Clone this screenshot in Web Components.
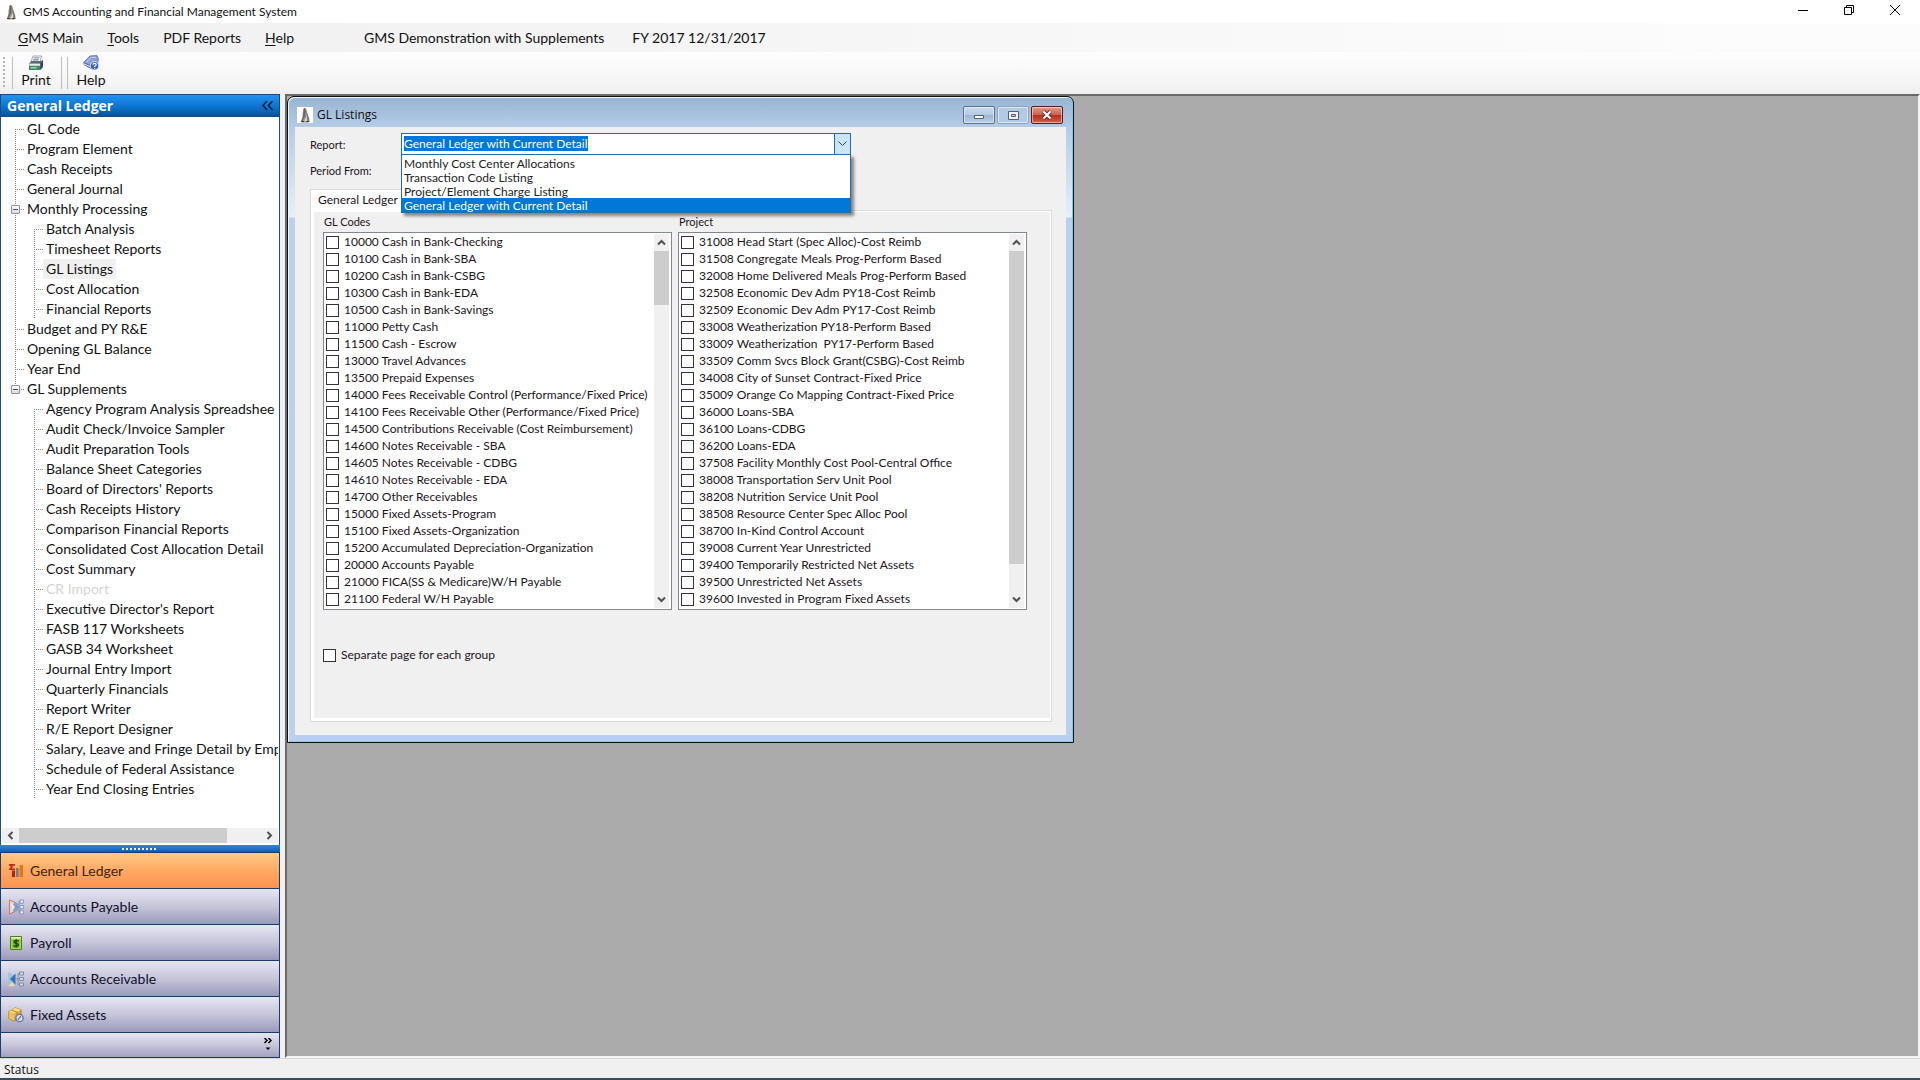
<!DOCTYPE html>
<html lang="en">
<head>
<meta charset="utf-8">
<title>GMS Accounting and Financial Management System</title>
<style>
html, body { height: 100%; }
body { margin: 0; overflow: hidden; font: 12px/16px "Open Sans", sans-serif; color: #111; background: #f0f0f0; }
</style>
</head>
<body>
<gms-app></gms-app>
<script>
const LATO = '"Lato", "Open Sans", sans-serif';
const UI = '"Open Sans", sans-serif';

class GmsElement extends HTMLElement {
  connectedCallback() {
    if (this.shadowRoot) return;
    this.attachShadow({ mode: 'open' }).innerHTML =
      `<style>*{box-sizing:border-box}:host{box-sizing:border-box}button{font:inherit;color:inherit;border:0;background:none;padding:0;margin:0;text-align:left}${this.css()}</style>${this.html()}`;
  }
  css() { return ''; }
  html() { return '<slot></slot>'; }
}
const define = (name, cls) => customElements.define(name, cls);

/* ---------- icons ---------- */
const ICONS = {
  logo: '<path d="M6.5 1.5 8 .8l1.4 1.4.5 3.3 2.2 5.3.6 3.4-2 1.2H5.2l-1.4-1 1.5-3.6.3-4.6z" fill="#9a958e"/><path d="M6.8 1.4 8 1l.8 3.6-.6 4.3-2.6 4.8-1-.3 1.5-4z" fill="#6b6660"/><path d="M8.8 5l.3 5.4-2 3.8h2.8l.6-4z" fill="#d9d5cc"/><path d="M9.4 3l2.2 8 .5 3-1.2-.3-1.500-5.400z" fill="#7a756e"/><path d="M4 14.5h3.2M9 14.6h3.4" stroke="#3e3a36"/>',
  print: '<path d="M5 1h8.5L12 7H3z" fill="#fdfdff" stroke="#8a93a8" stroke-width=".8"/><path d="M5.8 2.8h5.6M5.2 4.4h5.6M4.8 6h5.4" stroke="#5d6f96" stroke-width=".8"/><path d="M1 8.5 3.5 6H13l2-1.2V12l-2.6 3H1z" fill="#5b6876"/><path d="M1.3 8.6h11v2.2h-11z" fill="#e6edf0"/><path d="M1.6 11h10.6v3.5H1.6z" fill="#3e8e62"/><path d="M2.5 12h6v1.6h-6z" fill="#8fd8a8"/><path d="m12.4 8.5 2.4-3V12l-2.4 2.6z" fill="#34485a"/>',
  help: '<path d="M.5 7.5 7 1l7-.4L15.5 4 9 11z" fill="#8d9fd8" stroke="#5667a8" stroke-width=".8"/><path d="M.5 7.5 9 11v3.4L.8 10z" fill="#5568ac"/><path d="m1 9 8 3.3" stroke="#e7ecff"/><path d="m9 11 6.5-7v4L9 14.4z" fill="#7b8cc8"/><path d="M3.6 7 8 2.4h5" stroke="#c4cff3" fill="none"/><circle cx="11.5" cy="10.8" r="4.3" fill="#3f63c4" stroke="#d6e0fa"/><path d="M10 9.8c0-2 3.2-2 3.1-.1 0 1.1-1.5 1-1.5 2.2m0 .9v1" stroke="#fff" stroke-width="1.2" fill="none"/>',
  ledger: '<path d="M1 1h6v1.7H3.8L5.3 4 3.7 5.5H7V7H1V5.9L3 4 1 2.2z" fill="#c3271c"/><path d="M4 7.5h3V14H4z" fill="#b02418"/><path d="M8 5h2.6v9H8z" fill="#6f7b97"/><path d="M11.6 2H15v12h-3.4z" fill="#d97b12"/>',
  payable: '<path d="M1.5 1 9 4.5v7L1.5 15z" fill="#f6d3c3" stroke="#cf7461"/><path d="M3 9 6.5 3.5 9.5 5v6L5 12.5z" fill="#6aa3dc"/><path d="M3.5 4 7 8l-3.6 5z" fill="#fbead9"/><path d="M9 8h2M11 2.5v11M11 2.5h1M11 13.5h1" stroke="#7888a8" fill="none"/><path d="M12 1h3.4v3.2H12zM12 6.4h3.4v3.2H12zM12 11.8h3.4V15H12z" fill="#eef3fb" stroke="#7d8fb5" stroke-width=".9"/>',
  payroll: '<path d="M2.5 1.5h11v13h-11z" fill="#a8d94a" stroke="#4d7a23"/><path d="M3 2h10v1.6H3z" fill="#e3f5b4"/><path d="M4.4 4.5h7.2v8.4H4.4z" fill="#7fbf33"/><path d="M10.6 6.4c-.7-1.2-4.6-1.4-4.6.6 0 1.8 4.4 1 4.4 2.8 0 2-4 1.800-4.900.5M8.200 4.300v8.400" stroke="#1f4a12" stroke-width="1.400" fill="none"/>',
  receivable: '<path d="M0 1 7 5v6l-7 4z" fill="#9cc7e0"/><path d="M2 8 7.500 2.500v11z" fill="#2f76b8"/><path d="m0 15 4-3.500 3 2.500-2 1.500z" fill="#ead9a0"/><path d="M8 8h3M10 2.500v11M10 2.500h1.500M10 13.500h1.500" stroke="#8a8f9c" fill="none"/><path d="M11.500 1h4v3h-4zM11.500 6.500h4v3h-4zM11.500 12h4v3h-4z" fill="#d6d8e2" stroke="#858a98"/>',
  assets: '<path d="m.8 4.500 6.500-3.700L13 3v6.500L6 14 .8 11.500z" fill="#e9a63a" stroke="#9c6118" stroke-width=".8"/><path d="m.8 4.500 6.500-3.700L13 3 6.200 6.800z" fill="#ffdc8c"/><path d="M6.200 6.800V14L.8 11.500v-7z" fill="#f4bd57"/><path d="m3.600 3.200 5.700 2v3" stroke="#b87a22" fill="none"/><circle cx="11.500" cy="11" r="3.600" fill="#dfe7f5" stroke="#5e78ab" stroke-width="1.400"/><path d="m9.800 12.800 3.200-3.600" stroke="#54709f" stroke-width="1.200"/>',
};
define('gms-icon', class extends GmsElement {
  css() { return ':host{display:block;width:16px;height:16px;flex:none}svg{display:block}'; }
  html() { return `<svg width="16" height="16" viewBox="0 0 16 16" aria-hidden="true">${ICONS[this.getAttribute('name')]}</svg>`; }
});

/* ---------- application title bar ---------- */
define('gms-titlebar', class extends GmsElement {
  css() { return `:host{display:flex;align-items:center;height:23px;background:#fff;padding:0 2px 0 3px;color:#111;font:12px/16px ${LATO}}
    .name{flex:1;padding-left:4px}
    button{width:46px;height:23px;padding-bottom:3px;display:grid;place-items:center}svg{display:block}`; }
  html() { return `<gms-icon name="logo"></gms-icon><span class="name"><slot></slot></span>
    <button aria-label="Minimize"><svg width="10" height="10"><path d="M0 5.500h10" stroke="#000"/></svg></button>
    <button aria-label="Restore"><svg width="10" height="10" fill="none" stroke="#000"><path d="M.5 2.500h7v7h-7zM2.500 2.500v-2h7v7h-2"/></svg></button>
    <button aria-label="Close"><svg width="10" height="10"><path d="m0 0 10 10M10 0 0 10" stroke="#000"/></svg></button>`; }
});

/* ---------- menu bar ---------- */
define('gms-menubar', class extends GmsElement {
  css() { return `:host{display:flex;align-items:center;height:29px;padding-left:18px;font:14px/20px ${LATO};background:linear-gradient(90deg,#f0f0f0,#fcfcfc 90%)}
    nav{display:flex;gap:24px;width:346px}u{text-underline-offset:2px}.info{display:flex;gap:28px;white-space:nowrap}`; }
  html() { return `<nav><button><u>G</u>MS Main</button><button><u>T</u>ools</button><button>PDF Reports</button><button><u>H</u>elp</button></nav>
    <div class="info"><span>GMS Demonstration with Supplements</span><span>FY 2017 12/31/2017</span></div>`; }
});

/* ---------- toolbar ---------- */
define('gms-toolbar', class extends GmsElement {
  css() { return `:host{display:flex;align-items:center;height:42px;padding-left:3px;background:linear-gradient(#fdfdfd,#f6f6f6 70%,#eee);font:14px/18px ${LATO}}
    .grip{width:2px;height:32px;background:repeating-linear-gradient(#b4b4b4 0 2px,transparent 2px 4px);margin-right:7px}
    i{width:1px;height:32px;background:#bdbdbd}i + i{margin-left:5px}
    button{display:flex;flex-direction:column;align-items:center;width:48px;padding:0 2px 2px 0}`; }
  html() { return `<span class="grip"></span><i></i><button><gms-icon name="print"></gms-icon>Print</button><i></i><i></i><button><gms-icon name="help"></gms-icon>Help</button>`; }
});

/* ---------- scrollbar ---------- */
define('gms-scrollbar', class extends GmsElement {
  css() { const v = this.hasAttribute('vertical'); return `:host{display:flex;flex-direction:${v ? 'column' : 'row'};${v ? 'width' : 'height'}:15px;background:#f0f0f0;flex:none}
    button{width:17px;height:17px;${v ? 'width:15px' : 'height:15px'};display:grid;place-items:center;flex:none}
    .track{flex:1;display:flex;flex-direction:inherit}.thumb{background:#cdcdcd;flex:0 0 ${this.getAttribute('thumb')}%}
    svg{display:block}`; }
  html() {
    const arrow = (label, d) => `<button tabindex="-1" aria-label="${label}"><svg width="9" height="9"><path d="${d}" fill="none" stroke="#505050" stroke-width="2"/></svg></button>`;
    return this.hasAttribute('vertical')
      ? arrow('Scroll up', 'M1 6.500 4.500 3 8 6.500') + '<div class="track"><div class="thumb"></div></div>' + arrow('Scroll down', 'M1 2.500 4.500 6 8 2.500')
      : arrow('Scroll left', 'M6.500 1 3 4.500 6.500 8') + '<div class="track"><div class="thumb"></div></div>' + arrow('Scroll right', 'M2.500 1 6 4.500 2.500 8');
  }
});

/* ---------- navigation tree ---------- */
define('gms-tree-item', class extends GmsElement {
  css() { return `:host{display:block;--line:#8c8c8c}
    .row{display:flex;align-items:center;height:20px;position:relative}
    .stub{width:9px;height:1px;flex:none;background:repeating-linear-gradient(90deg,var(--line) 0 1px,transparent 1px 2px)}
    .label{height:20px;padding:0 3px;white-space:nowrap}
    :host([selected]) .label{background:#f0f0f0}
    :host([disabled]) .label{color:#d4d4d4}
    .toggle{position:absolute;left:-4px;top:6px;width:9px;height:9px;border:1px solid #919191;border-radius:1px;background:linear-gradient(#fff,#dcdcdc)}
    .toggle::after{content:"";position:absolute;left:1px;right:1px;top:3px;height:1px;background:#3c4c94}
    .children{padding-left:19px}`; }
  html() {
    const branch = this.hasAttribute('branch');
    return `<div class="row"><span class="stub"></span>${branch ? '<button class="toggle" aria-label="Collapse"></button>' : ''}<button class="label"${this.hasAttribute('disabled') ? ' disabled' : ''}>${this.getAttribute('label')}</button></div>${branch ? '<div class="children"><slot></slot></div>' : ''}`;
  }
});
/* A vertical dotted guide that runs beside a group, down to the middle of its last row. */
define('gms-tree-group', class extends GmsElement {
  css() { return `:host{display:block;background:repeating-linear-gradient(#8c8c8c 0 1px,transparent 1px 2px) no-repeat 0 var(--guide-top,0)/1px var(--guide)}`; }
});
const TREE = [
  ['GL Code'], ['Program Element'], ['Cash Receipts'], ['General Journal'],
  ['Monthly Processing', ['Batch Analysis', 'Timesheet Reports', 'GL Listings', 'Cost Allocation', 'Financial Reports']],
  ['Budget and PY R&amp;E'], ['Opening GL Balance'], ['Year End'],
  ['GL Supplements', ['Agency Program Analysis Spreadshee', 'Audit Check/Invoice Sampler', 'Audit Preparation Tools', 'Balance Sheet Categories', "Board of Directors' Reports", 'Cash Receipts History', 'Comparison Financial Reports', 'Consolidated Cost Allocation Detail', 'Cost Summary', 'CR Import', "Executive Director's Report", 'FASB 117 Worksheets', 'GASB 34 Worksheet', 'Journal Entry Import', 'Quarterly Financials', 'Report Writer', 'R/E Report Designer', 'Salary, Leave and Fringe Detail by Emp', 'Schedule of Federal Assistance', 'Year End Closing Entries']],
];
define('gms-tree', class extends GmsElement {
  css() { return `:host{display:flex;flex-direction:column;background:#fff;border:solid #1d4e89;border-width:0 1px;padding:2px 1px 2px;font:14px/20px ${LATO};min-height:0;overflow:hidden}
    .view{flex:1;overflow:hidden;padding-left:13px}`; }
  html() {
    const leaf = l => `<gms-tree-item label="${l}"${l === 'GL Listings' ? ' selected' : ''}${l === 'CR Import' ? ' disabled' : ''}></gms-tree-item>`;
    const items = TREE.map(([l, kids]) => kids
      ? `<gms-tree-item branch label="${l}"><gms-tree-group style="--guide:${kids.length * 20 - 10}px">${kids.map(leaf).join('')}</gms-tree-group></gms-tree-item>` : leaf(l)).join('');
    return `<div class="view"><gms-tree-group style="--guide-top:10px;--guide:260px">${items}</gms-tree-group></div><gms-scrollbar thumb="86"></gms-scrollbar>`;
  }
});

/* ---------- sidebar ---------- */
define('gms-nav-button', class extends GmsElement {
  css() { return `:host{display:block;border-bottom:1px solid #1a3c6c}
    button{display:flex;align-items:center;gap:6px;width:100%;height:35px;padding-left:7px;font:14px/20px ${LATO};color:#10102a;background:linear-gradient(#e6e6f2,#c6c5da 50%,#9c9abb)}
    :host([active]) button{background:linear-gradient(#ffca86,#ffa963 50%,#fd9350);color:#3b2408}`; }
  html() { return `<button><gms-icon name="${this.getAttribute('icon')}"></gms-icon><slot></slot></button>`; }
});
define('gms-nav-footer', class extends GmsElement {
  css() { return `:host{display:flex;justify-content:flex-end;height:25px;padding:5px 7px 0;border-bottom:1px solid #1a3c6c;background:linear-gradient(#e6e6f2,#c6c5da 50%,#a3a1c0)}button{height:14px}svg{display:block}`; }
  html() { return `<button aria-label="Configure buttons"><svg width="8" height="14"><path d="m.5 0 2.500 2.500L.5 5M4.500 0 7 2.500 4.500 5" fill="none" stroke="#000" stroke-width="1.500"/><path d="M1.500 9.500h5L4 12z"/></svg></button>`; }
});
define('gms-sidebar', class extends GmsElement {
  css() { return `:host{display:flex;flex-direction:column;width:280px;flex:none;min-height:0}
    header{display:flex;align-items:center;justify-content:space-between;height:23px;padding:0 6px;background:linear-gradient(#2192f0,#0b72cc 60%,#0a5399);border:1px solid #134a86;color:#fff;font:bold 14px/20px ${UI}}
    gms-tree{flex:1}
    .split{height:8px;display:grid;place-items:center;background:linear-gradient(#2a8ae0,#0d5fae);border-bottom:1px solid #1a3c6c}
    .split span{width:36px;height:2px;background:repeating-linear-gradient(90deg,#fff 0 2px,transparent 2px 4px)}
    .stack{border:solid #1a3c6c;border-width:0 1px}
    svg{display:block}`; }
  html() { return `<header><span>General Ledger</span><button aria-label="Collapse sidebar"><svg width="11" height="10"><path d="M5 0 1 4.500 5 9M10.500 0l-4 4.500 4 4.500" fill="none" stroke="#061a33" stroke-width="1.500"/></svg></button></header>
    <gms-tree></gms-tree><div class="split"><span></span></div>
    <div class="stack"><gms-nav-button icon="ledger" active>General Ledger</gms-nav-button><gms-nav-button icon="payable">Accounts Payable</gms-nav-button><gms-nav-button icon="payroll">Payroll</gms-nav-button><gms-nav-button icon="receivable">Accounts Receivable</gms-nav-button><gms-nav-button icon="assets">Fixed Assets</gms-nav-button>
    <gms-nav-footer></gms-nav-footer></div>`; }
});

/* ---------- check list ---------- */
define('gms-check', class extends GmsElement {
  css() { return `:host{display:block}label{display:flex;align-items:center;gap:5px;height:17px;font-size:12px;white-space:pre}
    span{padding-bottom:2px}
    input{appearance:none;width:13px;height:13px;margin:0;border:1px solid #333;background:#fff;flex:none}
    input:checked{background:#0078d7}`; }
  html() { return '<label><input type="checkbox"><span><slot></slot></span></label>'; }
});
define('gms-checklist', class extends GmsElement {
  css() { return `:host{display:block;width:349px}h3{margin:0;font:inherit;height:19px;line-height:17px;padding-left:1px}
    .box{display:flex;border:1px solid #828790;background:#fff;padding:1px 2px 1px}
    .items{flex:1;overflow:hidden}`; }
  html() { return `<h3>${this.getAttribute('heading')}</h3><div class="box"><div class="items"><slot></slot></div><gms-scrollbar vertical thumb="${this.getAttribute('thumb')}"></gms-scrollbar></div>`; }
});

/* ---------- report combo box ---------- */
define('gms-combobox', class extends GmsElement {
  css() { return `:host{display:block;position:relative;flex:1;font-size:12px}
    .field{display:flex;height:22px;border:1px solid #1f6fa8;background:#fff;padding:2px 0 3px 2px}
    input{field-sizing:content;border:0;outline:0;padding:0;margin:0;height:15px;background:#0078d7;color:#fff;font:inherit}
    .field button{width:16px;height:20px;margin:-2px 0 0 auto;background:#cce4f7;border-left:1px solid #1f6fa8;display:grid;place-items:center}
    select{position:absolute;z-index:2;left:0;top:21px;width:100%;height:59px;border:1px solid #1f6fa8;border-radius:0;background:#fff;padding:1px 0 0;margin:0;outline:0;overflow:hidden;appearance:none;font:inherit;color:#222;box-shadow:3px 3px 3px rgba(0,0,0,.45)}
    option{padding:0 2px;height:14px;min-height:14px;line-height:14px;color:#222}
    option:checked{background:#0078d7 linear-gradient(#0078d7,#0078d7);color:#fff}`; }
  html() { return `<div class="field"><input type="text" aria-label="Report" value="General Ledger with Current Detail"><button aria-label="Open list"><svg width="9" height="6"><path d="m.5.5 4 4 4-4" fill="none" stroke="#444"/></svg></button></div>
    <select size="4" aria-label="Report choices"><option>Monthly Cost Center Allocations</option><option>Transaction Code Listing</option><option>Project/Element Charge Listing</option><option selected>General Ledger with Current Detail</option></select>`; }
});

/* ---------- child window ---------- */
define('gms-window', class extends GmsElement {
  css() { return `:host{display:block;border:1px solid #0a0f14;border-radius:7px 7px 0 0;padding:0 7px 7px;background:linear-gradient(#98b4d2,#b4cbe6 30px,#e6f0fa 120px,#b9d1ea 121px);box-shadow:inset 1px 1px 0 #eef5fc,inset -1px -1px 0 #74d2f5}
    header{display:flex;align-items:center;height:30px;gap:4px;padding:6px 3px 0 2px}
    .ic{background:#fff}.t{flex:1;color:#111}.btns{display:flex;gap:2px;align-self:flex-start;padding-top:3px}
    .btns button{width:32px;height:18px;border:1px solid #5b6f8c;border-radius:2px;display:grid;place-items:center;background:linear-gradient(#c8dcf0,#b3c9e2 50%,#9ab4d3 50%,#b9d2ea);box-shadow:inset 0 0 0 1px rgba(255,255,255,.5)}
    .btns .max{border-color:#8fa5c0;background:#b3cae4}
    .btns .close{border-color:#5a1a18;background:linear-gradient(#e29a8c,#cf5f4c 50%,#b92b18 50%,#d3614a)}
    svg{display:block}.body{background:#f0f0f0}`; }
  html() { return `<header><gms-icon class="ic" name="logo"></gms-icon><span class="t">${this.getAttribute('caption')}</span><div class="btns">
    <button aria-label="Minimize"><svg width="12" height="10"><path d="M1.500 5.500h9v3h-9z" fill="#fff" stroke="#555f70"/></svg></button>
    <button class="max" aria-label="Maximize"><svg width="11" height="9"><path d="M.5.5h10v8H.5z" fill="#eef3f8" stroke="#555f70"/><path d="M3.500 3.500h4v2h-4z" fill="#b3cae4" stroke="#555f70"/></svg></button>
    <button class="close" aria-label="Close"><svg width="12" height="10"><path d="m2.500 1.500 7 7m0-7-7 7" stroke="#5b2a2a" stroke-width="4"/><path d="m2.500 1.500 7 7m0-7-7 7" stroke="#fff" stroke-width="2.200"/></svg></button></div></header>
    <div class="body"><slot></slot></div>`; }
});

/* ---------- GL Listings form ---------- */
const CODES = ['10000 Cash in Bank-Checking', '10100 Cash in Bank-SBA', '10200 Cash in Bank-CSBG', '10300 Cash in Bank-EDA', '10500 Cash in Bank-Savings', '11000 Petty Cash', '11500 Cash - Escrow', '13000 Travel Advances', '13500 Prepaid Expenses', '14000 Fees Receivable Control (Performance/Fixed Price)', '14100 Fees Receivable Other (Performance/Fixed Price)', '14500 Contributions Receivable (Cost Reimbursement)', '14600 Notes Receivable - SBA', '14605 Notes Receivable - CDBG', '14610 Notes Receivable - EDA', '14700 Other Receivables', '15000 Fixed Assets-Program', '15100 Fixed Assets-Organization', '15200 Accumulated Depreciation-Organization', '20000 Accounts Payable', '21000 FICA(SS &amp; Medicare)W/H Payable', '21100 Federal W/H Payable'];
const PROJECTS = ['31008 Head Start (Spec Alloc)-Cost Reimb', '31508 Congregate Meals Prog-Perform Based', '32008 Home Delivered Meals Prog-Perform Based', '32508 Economic Dev Adm PY18-Cost Reimb', '32509 Economic Dev Adm PY17-Cost Reimb', '33008 Weatherization PY18-Perform Based', '33009 Weatherization  PY17-Perform Based', '33509 Comm Svcs Block Grant(CSBG)-Cost Reimb', '34008 City of Sunset Contract-Fixed Price', '35009 Orange Co Mapping Contract-Fixed Price', '36000 Loans-SBA', '36100 Loans-CDBG', '36200 Loans-EDA', '37508 Facility Monthly Cost Pool-Central Office', '38008 Transportation Serv Unit Pool', '38208 Nutrition Service Unit Pool', '38508 Resource Center Spec Alloc Pool', '38700 In-Kind Control Account', '39008 Current Year Unrestricted', '39400 Temporarily Restricted Net Assets', '39500 Unrestricted Net Assets', '39600 Invested in Program Fixed Assets'];
define('gms-listings-form', class extends GmsElement {
  css() { return `:host{display:block;padding:6px 14px 13px 15px;font:11px/15px ${LATO};color:#1c1420}
    .line{display:flex;align-items:center;height:22px}.line + .line{margin-top:5px;height:21px}
    .line > span{width:91px}gms-combobox{flex:0 0 450px}
    .tab{display:block;margin-top:8px;height:22px;margin-bottom:-1px;position:relative;padding:0 6px 3px 7px;border:1px solid #dcdcdc;border-bottom:0;background:#fff;font-size:12px}
    .page{border:1px solid #dcdcdc;background:#fff;padding:1px 1px 3px 3px}
    .inner{background:#f0f0f0;padding:1px 9px 54px}
    .lists{display:flex;gap:6px;margin-bottom:37px}`; }
  html() {
    const list = a => a.map(t => `<gms-check>${t}</gms-check>`).join('');
    return `<div class="line"><span>Report:</span><gms-combobox></gms-combobox></div><div class="line"><span>Period From:</span></div>
    <button class="tab">General Ledger</button><div class="page"><div class="inner"><div class="lists">
    <gms-checklist heading="GL Codes" thumb="16">${list(CODES)}</gms-checklist><gms-checklist heading="Project" thumb="92">${list(PROJECTS)}</gms-checklist></div>
    <gms-check>Separate page for each group</gms-check></div></div>`;
  }
});

/* ---------- desktop and application shell ---------- */
define('gms-workspace', class extends GmsElement {
  css() { return `:host{display:block;position:relative;flex:1;margin-left:5px;border:solid #696969;border-width:2px 0 0 2px;background:#ababab;border-right:2px solid #f4f4f4;border-bottom:2px solid #f4f4f4;overflow:hidden}`; }
});
define('gms-statusbar', class extends GmsElement {
  css() { return `:host{display:flex;align-items:center;height:22px;padding:2px 0 0 4px;border-top:1px solid #d7d7d7;border-bottom:2px solid #3b4b57;background:#f0f0f0}`; }
});
define('gms-app', class extends GmsElement {
  css() { return `:host{display:flex;flex-direction:column;height:100vh}
    main{flex:1;display:flex;min-height:0}gms-window{position:absolute;left:0;top:0;width:787px}`; }
  html() { return `<gms-titlebar>GMS Accounting and Financial Management System</gms-titlebar><gms-menubar></gms-menubar><gms-toolbar></gms-toolbar>
    <main><gms-sidebar></gms-sidebar><gms-workspace><gms-window caption="GL Listings"><gms-listings-form></gms-listings-form></gms-window></gms-workspace></main>
    <gms-statusbar>Status</gms-statusbar>`; }
});
</script>
</body>
</html>
